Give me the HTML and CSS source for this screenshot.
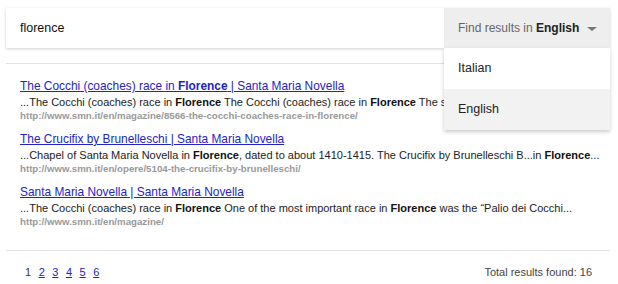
FILE: index.html
```html
<!DOCTYPE html>
<html lang="en">
<head>
    <meta charset="UTF-8">
    <meta name="viewport" content="width=device-width, initial-scale=1.0">
    <title>Search</title>
    <link rel="stylesheet" href="styles.css">
</head>
<body>
    <div class="search-page">
        <!-- Search bar with language picker -->
        <div class="search-bar">
            <div class="query">florence</div>
            <div class="lang-select">
                <span>Find results in <b>English</b></span>
                <span class="caret"></span>
                <ul class="lang-menu">
                    <li>Italian</li>
                    <li class="active">English</li>
                </ul>
            </div>
        </div>

        <div class="results">
            <div class="result">
                <a href="#" class="result-title">The Cocchi (coaches) race in <b>Florence</b> | Santa Maria Novella</a>
                <p class="snippet">...The Cocchi (coaches) race in <b>Florence</b> The Cocchi (coaches) race in <b>Florence</b> The sound of the hooves on the cobbles</p>
                <p class="url">http://www.smn.it/en/magazine/8566-the-cocchi-coaches-race-in-florence/</p>
            </div>
            <div class="result">
                <a href="#" class="result-title">The Crucifix by Brunelleschi | Santa Maria Novella</a>
                <p class="snippet">...Chapel of Santa Maria Novella in <b>Florence</b>, dated to about 1410-1415. The Crucifix by Brunelleschi B...in <b>Florence</b>...</p>
                <p class="url">http://www.smn.it/en/opere/5104-the-crucifix-by-brunelleschi/</p>
            </div>
            <div class="result">
                <a href="#" class="result-title">Santa Maria Novella | Santa Maria Novella</a>
                <p class="snippet">...The Cocchi (coaches) race in <b>Florence</b> One of the most important race in <b>Florence</b> was the “Palio dei Cocchi...</p>
                <p class="url">http://www.smn.it/en/magazine/</p>
            </div>
        </div>

        <div class="footer">
            <div class="pages">
                <span>1</span>
                <a href="#">2</a>
                <a href="#">3</a>
                <a href="#">4</a>
                <a href="#">5</a>
                <a href="#">6</a>
            </div>
            <div class="total">Total results found: 16</div>
        </div>
    </div>
</body>
</html>
```

FILE: styles.css
```css
body {
    margin: 0;
    font-family: "Liberation Sans", Arial, sans-serif;
    color: #222;
    background: #fff;
}
.search-page {
    width: 604px;
    margin: 8px 0 0 6px;
}
.search-bar {
    display: flex;
    height: 40px;
    background: #fff;
    box-shadow: 0 1px 3px rgba(0, 0, 0, 0.18);
}
.query {
    flex: 1;
    padding-left: 14px;
    line-height: 40px;
    font-size: 12.5px;
    color: #111;
}
.lang-select {
    position: relative;
    width: 166px;
    display: flex;
    align-items: center;
    justify-content: space-between;
    padding: 0 13px 0 14px;
    box-sizing: border-box;
    background: #eeeeee;
    font-size: 12px;
    color: #666;
    white-space: nowrap;
}
.lang-select b {
    color: #222;
}
.caret {
    width: 0;
    height: 0;
    border-left: 5px solid transparent;
    border-right: 5px solid transparent;
    border-top: 4px solid #777;
    margin-top: 1px;
}
.lang-menu {
    position: absolute;
    top: 100%;
    left: 0;
    right: 0;
    margin: 0;
    padding: 0;
    list-style: none;
    background: #fff;
    box-shadow: 0 2px 4px rgba(0, 0, 0, 0.2);
    z-index: 2;
}
.lang-menu li {
    height: 41px;
    line-height: 41px;
    padding-left: 14px;
    font-size: 12.5px;
    color: #222;
}
.lang-menu li.active {
    background: #f2f2f2;
}
.results {
    margin-top: 15px;
    border-top: 1px solid #e3e3e3;
    border-bottom: 1px solid #e3e3e3;
    padding: 14px 0 22px 14px;
}
.result {
    margin-bottom: 9px;
}
.result:last-child {
    margin-bottom: 0;
}
.result-title {
    display: block;
    font-size: 11.9px;
    line-height: 16px;
    color: #2323c9;
}
.snippet {
    margin: 0;
    font-size: 11px;
    line-height: 16px;
    color: #222;
    white-space: nowrap;
    overflow: hidden;
    text-overflow: ellipsis;
}
.snippet b {
    color: #111;
}
.url {
    margin: 0;
    font-size: 9.7px;
    line-height: 12px;
    font-weight: bold;
    color: #999;
}
.footer {
    display: flex;
    justify-content: space-between;
    align-items: center;
    height: 42px;
    padding: 0 18px 0 19px;
    font-size: 11px;
}
.pages {
    display: flex;
    gap: 7.5px;
}
.pages span {
    color: #333;
}
.pages a {
    color: #2323c9;
}
.total {
    color: #444;
}
```
